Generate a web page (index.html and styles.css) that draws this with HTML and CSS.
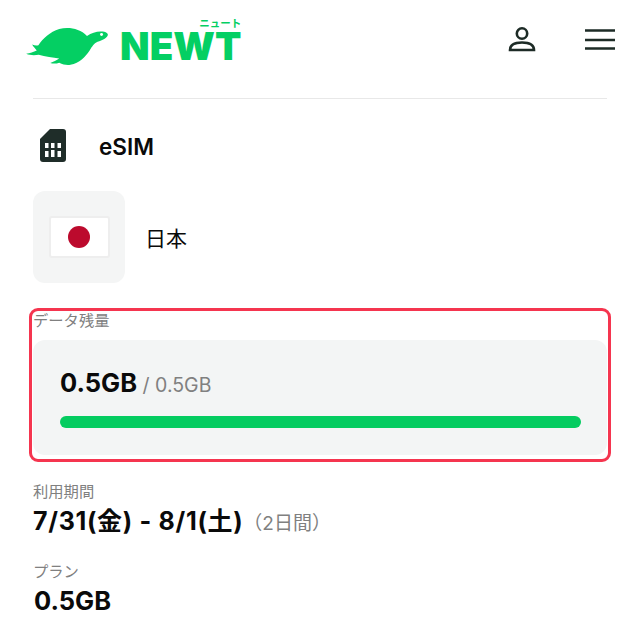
FILE: index.html
```html
<!DOCTYPE html>
<html lang="ja">
<head>
  <title>NEWT eSIM</title>
  <meta name="viewport" content="width=device-width">
  <link rel="stylesheet" href="styles.css">
</head>
<body>

<header class="header">
  <div class="logo">
    <svg class="logo-turtle" viewBox="78 76 250 118" width="83" height="39">
      <path fill="#04cf63" d="M78 160 C90 158 100 155 110 150 C105 144 100 139 96 132 C103 135 109 136 115 134 C128 114 150 94 178 85 C208 78 240 84 262 106 C276 97 292 92 306 93 C318 93 326 98 325 103 C324 112 308 119 294 124 C282 130 278 138 270 150 C256 170 240 188 212 193 C202 195 190 193 178 187 C170 190 160 191 151 188 C160 183 170 180 178 174 C160 172 135 168 116 163 C103 165 90 165 78 160 Z"/>
      <circle fill="#fff" cx="306" cy="102" r="4.5"/>
    </svg>
    <div class="logo-word">
      <span class="logo-kana">ニュート</span>
      <span class="logo-name">NEWT</span>
    </div>
  </div>
  <div class="header-icons">
    <svg viewBox="0 0 28 26" width="28" height="26">
      <circle cx="14" cy="7.5" r="5.2" fill="none" stroke="#1d2b26" stroke-width="2.6"/>
      <path fill="none" stroke="#1d2b26" stroke-width="2.6" d="M2 24 C2 18 7 16.5 14 16.5 C21 16.5 26 18 26 24 Z"/>
    </svg>
    <svg class="menu-icon" viewBox="0 0 30 21" width="30" height="21">
      <path stroke="#1d2b26" stroke-width="2.6" d="M0 1.5 H30 M0 11 H30 M0 19.5 H30"/>
    </svg>
  </div>
</header>

<section class="type-row">
  <svg class="sim-icon" viewBox="0 0 26 33" width="26" height="33">
    <path fill="#1f2d29" d="M10 0 H23 Q26 0 26 3 V30 Q26 33 23 33 H3 Q0 33 0 30 V10 Z"/>
    <g fill="#fff">
      <rect x="5" y="14" width="3.5" height="5"/>
      <rect x="11" y="14" width="3.5" height="5"/>
      <rect x="17.5" y="14" width="3.5" height="5"/>
      <rect x="5" y="22" width="3.5" height="6"/>
      <rect x="11" y="21" width="3.5" height="7"/>
      <rect x="17.5" y="22" width="3.5" height="6"/>
    </g>
  </svg>
  <span class="type-name">eSIM</span>
</section>

<section class="country">
  <div class="flag-box">
    <div class="flag"><div class="flag-sun"></div></div>
  </div>
  <span class="country-name">日本</span>
</section>

<section class="data-highlight">
  <div class="label">データ残量</div>
  <div class="data-card">
    <div class="data-amount"><strong>0.5GB</strong><span class="data-total"> / 0.5GB</span></div>
    <div class="bar"></div>
  </div>
</section>

<section class="info info-period">
  <div class="label">利用期間</div>
  <div class="info-value">7/31(金) - 8/1(土)<span class="info-note">（2日間）</span></div>
</section>

<section class="info info-plan">
  <div class="label">プラン</div>
  <div class="info-value info-value-plan">0.5GB</div>
</section>

</body>
</html>
```

FILE: styles.css
```css
* { box-sizing: border-box; }
html, body { margin: 0; padding: 0; }
body { height: 624px; overflow: hidden; padding: 0 33px; background: white; color: #0a0a0a; font-family: Inter, "Noto Sans CJK JP", sans-serif; }

.header { display: flex; justify-content: space-between; height: 99px; border-bottom: 1px solid #e8e8e8; }
.logo { display: flex; align-items: flex-start; margin-left: -7px; padding-top: 18px; }
.logo-turtle { display: block; margin-top: 8px; }
.logo-word { display: flex; flex-direction: column; align-items: flex-end; margin-left: 11px; }
.logo-name { font-weight: 900; font-size: 38.5px; line-height: 30px; margin-top: 2px; color: #04cf63; }
.logo-kana { font-size: 10.5px; line-height: 11px; font-weight: 700; color: #04cf63; white-space: nowrap; }

.header-icons { display: flex; align-items: flex-start; gap: 49px; margin-right: -8px; padding-top: 26px; }
.menu-icon { margin-top: 3px; }

.type-row { display: flex; align-items: center; height: 33px; margin-top: 30px; padding-left: 7px; }
.type-name { margin-left: 33px; margin-top: 2px; font-size: 22.5px; font-weight: 600; }

.country { display: flex; align-items: center; margin-top: 29px; }
.flag-box { display: flex; align-items: center; justify-content: center; width: 92px; height: 92px; background: #f4f5f5; border-radius: 12px; }
.flag { display: flex; align-items: center; justify-content: center; width: 57px; height: 38px; background: white; box-shadow: 0 0 0 2px #eeeeee; border-radius: 1px; }
.flag-sun { width: 22px; height: 22px; border-radius: 50%; background: #bc0a2d; }
.country-name { margin-left: 20px; font-size: 21px; }

.label { font-size: 15.3px; line-height: 20px; color: #808080; }

.data-highlight { margin: 25px -4px 0; height: 154px; padding: 0 1px; border: 3px solid #f5354f; border-radius: 9px; }
.data-card { height: 115px; margin-top: 9px; padding: 28px 26px 0 27px; background: #f3f5f5; border-radius: 12px; }
.data-amount { line-height: 30px; color: #808080; }
.data-amount strong { font-size: 25.5px; font-weight: 700; color: #0a0a0a; }
.data-total { font-size: 19.5px; }
.bar { height: 12px; margin-top: 15px; background: #04cc60; border-radius: 6px; }

.info-period { margin-top: 20px; }
.info-plan { margin-top: 22px; }
.info-value { font-size: 25px; line-height: 32px; font-weight: 700; margin-top: 3px; }
.info-value-plan { font-size: 25.5px; padding-left: 1px; }
.info-period .info-value { letter-spacing: 0.7px; }
.info-note { font-size: 19px; font-weight: 400; letter-spacing: 0; color: #808080; }
```
